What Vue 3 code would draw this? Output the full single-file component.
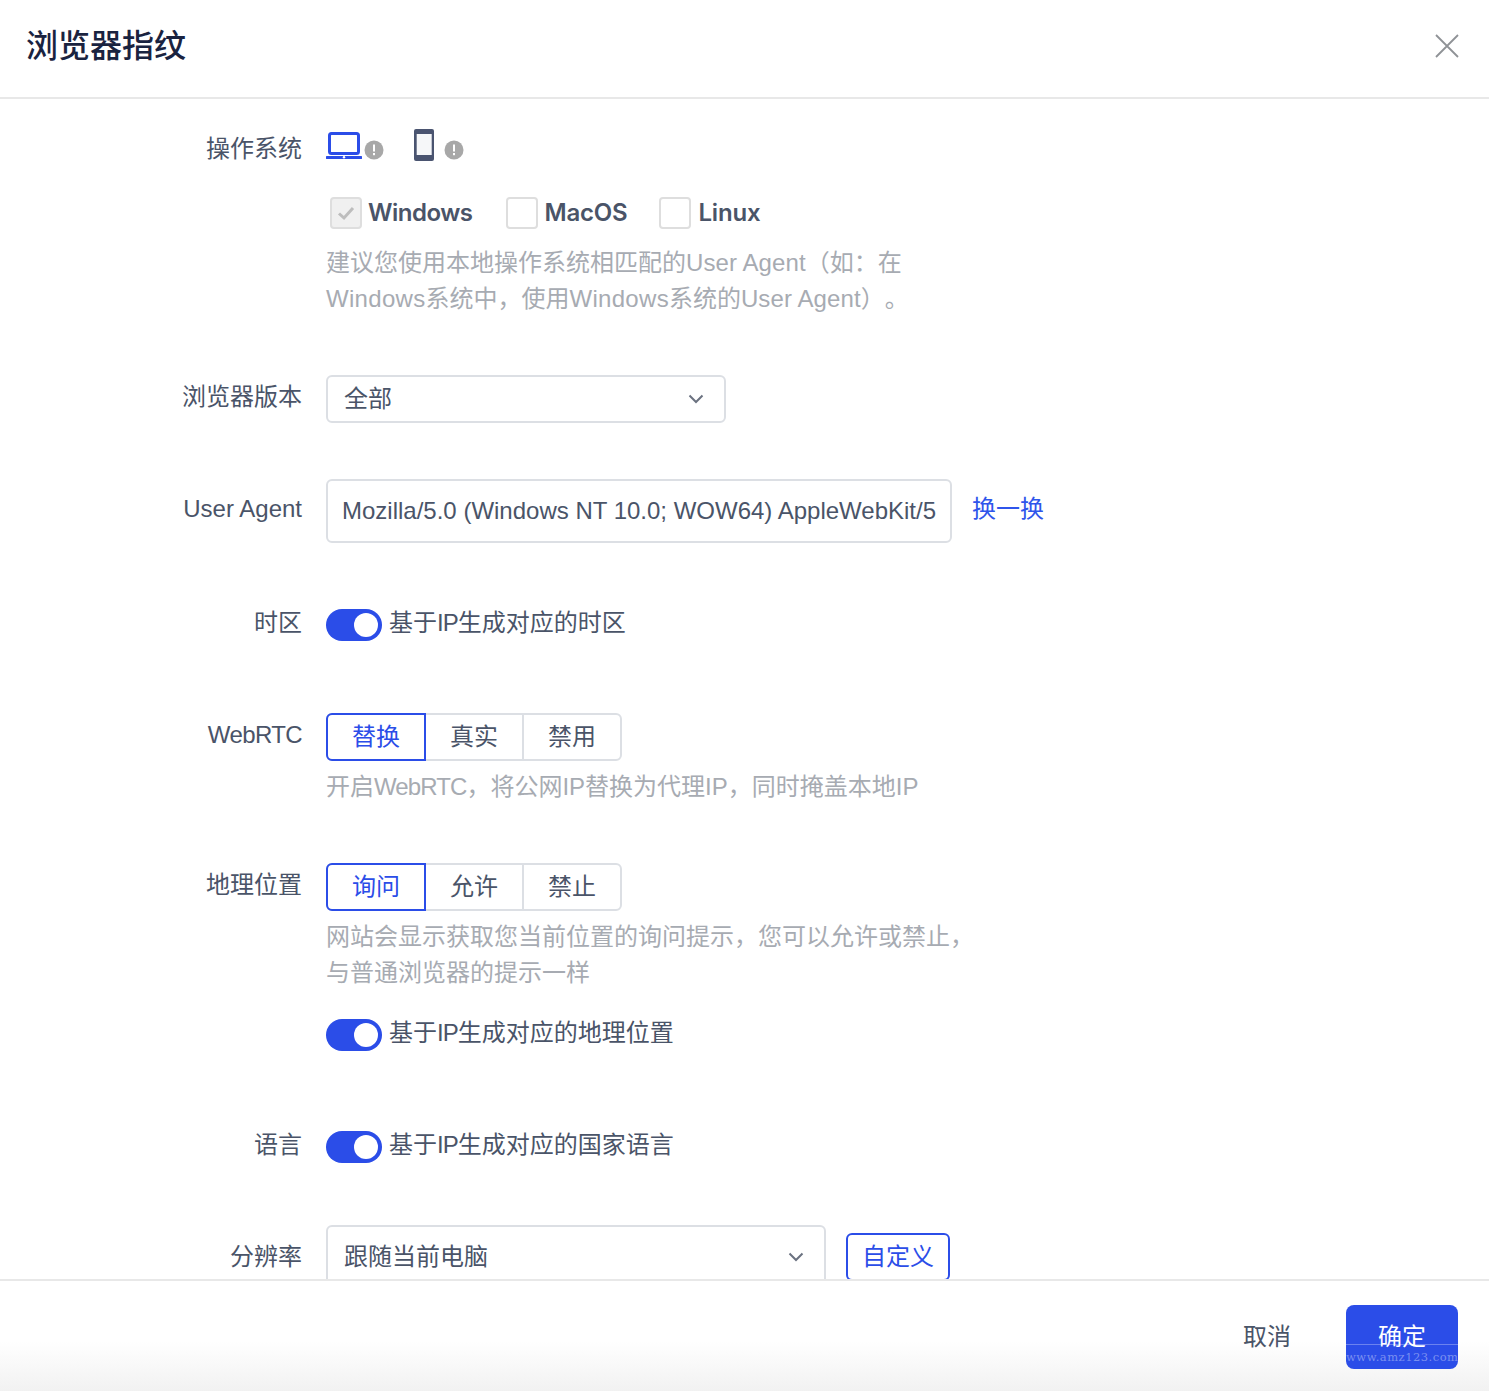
<script setup>
const osOptions = [
  { name: 'Windows', checked: true },
  { name: 'MacOS', checked: false },
  { name: 'Linux', checked: false }
]
const webrtc = ['替换', '真实', '禁用']
const geo = ['询问', '允许', '禁止']
</script>

<template>
  <div class="dialog">
    <header class="head">
      <h1 class="title">浏览器指纹</h1>
      <svg class="close" viewBox="0 0 24 24" width="24" height="24" fill="none" stroke="#8f9296" stroke-width="1.8">
        <path d="M1 1 23 23M23 1 1 23" />
      </svg>
    </header>

    <main class="body">
      <section class="row row-os">
        <div class="label">操作系统</div>
        <div class="field">
          <div class="devices">
            <span class="device">
              <svg width="36" height="30" viewBox="0 0 36 30" fill="none">
                <rect x="3.500" y="2.500" width="29" height="20" rx="2" stroke="#2b4de8" stroke-width="3" />
                <path d="M1 26.500H35" stroke="#2b4de8" stroke-width="3" stroke-linecap="round" />
                <circle cx="18" cy="26.300" r="1.200" fill="#fff" />
              </svg>
              <svg class="warn" width="20" height="20" viewBox="0 0 20 20">
                <circle cx="10" cy="10" r="9.500" fill="#a8a8a8" />
                <rect x="9" y="4.500" width="2" height="7" fill="#fff" />
                <rect x="9" y="13" width="2" height="2.200" fill="#fff" />
              </svg>
            </span>
            <span class="device device-phone">
              <svg width="22" height="32" viewBox="0 0 22 32">
                <rect x="2" y="0" width="20" height="32" rx="2" fill="#4a5470" />
                <rect x="4.700" y="5" width="15" height="21" fill="#f6f7f9" />
              </svg>
              <svg class="warn" width="20" height="20" viewBox="0 0 20 20">
                <circle cx="10" cy="10" r="9.500" fill="#a8a8a8" />
                <rect x="9" y="4.500" width="2" height="7" fill="#fff" />
                <rect x="9" y="13" width="2" height="2.200" fill="#fff" />
              </svg>
            </span>
          </div>
          <div class="checks">
            <label v-for="o in osOptions" :key="o.name" class="check">
              <span class="box" :class="{ 'box-on': o.checked }">
                <svg v-if="o.checked" width="20" height="16" viewBox="0 0 20 16" fill="none">
                  <path d="M3 8.500 8 13 17 3" stroke="#bdbdbd" stroke-width="3" />
                </svg>
              </span>
              <span class="check-text">{{ o.name }}</span>
            </label>
          </div>
          <p class="hint hint-os">建议您使用本地操作系统相匹配的<span class="wide-s">User Agent</span>（如：在<br /><span class="wide">Windows</span>系统中，使用<span class="wide">Windows</span>系统的<span class="wide-s">User Agent</span>）。</p>
        </div>
      </section>

      <section class="row row-version">
        <div class="label">浏览器版本</div>
        <div class="field">
          <div class="select select-400">
            <span>全部</span>
            <svg width="16" height="10" viewBox="0 0 16 10" fill="none"><path d="M1.500 1.500 8 8l6.500-6.500" stroke="#6b7280" stroke-width="2" /></svg>
          </div>
        </div>
      </section>

      <section class="row row-ua">
        <div class="label">User Agent</div>
        <div class="field field-inline">
          <div class="ua-input"><span class="ua-text">Mozilla/5.0 (Windows NT 10.0; WOW64) AppleWebKit/5</span></div>
          <a class="link">换一换</a>
        </div>
      </section>

      <section class="row row-tz">
        <div class="label">时区</div>
        <div class="field">
          <div class="switch-line"><span class="switch"><i></i></span><span class="switch-text">基于<span class="ip">IP</span>生成对应的时区</span></div>
        </div>
      </section>

      <section class="row row-rtc">
        <div class="label label-rtc">WebRTC</div>
        <div class="field">
          <div class="seg">
            <span v-for="(s, i) in webrtc" :key="s" class="seg-item" :class="{ active: i === 0 }">{{ s }}</span>
          </div>
          <p class="hint hint-seg">开启<span class="tight">WebRTC</span>，将公网IP替换为代理IP，同时掩盖本地IP</p>
        </div>
      </section>

      <section class="row row-geo">
        <div class="label">地理位置</div>
        <div class="field">
          <div class="seg">
            <span v-for="(s, i) in geo" :key="s" class="seg-item" :class="{ active: i === 0 }">{{ s }}</span>
          </div>
          <p class="hint hint-seg">网站会显示获取您当前位置的询问提示，您可以允许或禁止，<br />与普通浏览器的提示一样</p>
          <div class="switch-line geo-switch"><span class="switch"><i></i></span><span class="switch-text">基于<span class="ip">IP</span>生成对应的地理位置</span></div>
        </div>
      </section>

      <section class="row row-lang">
        <div class="label">语言</div>
        <div class="field">
          <div class="switch-line"><span class="switch"><i></i></span><span class="switch-text">基于<span class="ip">IP</span>生成对应的国家语言</span></div>
        </div>
      </section>

      <section class="row row-res">
        <div class="label">分辨率</div>
        <div class="field field-res">
          <div class="select select-500">
            <span>跟随当前电脑</span>
            <svg width="16" height="10" viewBox="0 0 16 10" fill="none"><path d="M1.500 1.500 8 8l6.500-6.500" stroke="#6b7280" stroke-width="2" /></svg>
          </div>
          <span class="custom">自定义</span>
        </div>
      </section>
    </main>

    <footer class="foot">
      <span class="cancel">取消</span>
      <span class="ok">
        确定
        <span class="mark">www.amz123.com</span>
      </span>
    </footer>
  </div>
</template>

<style>
html, body { margin: 0; background: #fff; }
</style>

<style scoped>
* { box-sizing: border-box; }
.dialog {
  width: 1489px;
  height: 1391px;
  display: flex;
  flex-direction: column;
  overflow: hidden;
  background: #fff;
  color: #4a5468;
  font-family: "Liberation Sans", "Noto Sans CJK SC", sans-serif;
  font-size: 24px;
  line-height: 36px;
  text-spacing-trim: space-all;
}
.head {
  flex: none;
  height: 99px;
  border-bottom: 2px solid #e8e8e8;
  display: flex;
  align-items: center;
  justify-content: space-between;
  padding: 0 30px 6px 26px;
}
.title { margin: 0; font-size: 32px; font-weight: 500; line-height: 44px; color: #1a2340; }
.body { flex: 1; min-height: 0; overflow: hidden; }
.row { display: grid; grid-template-columns: 302px 1fr; column-gap: 24px; }
.label { text-align: right; white-space: nowrap; }
.label-rtc { letter-spacing: -0.600px; }
.tight { letter-spacing: -0.900px; }
.wide { letter-spacing: 0.300px; }
.wide-s { letter-spacing: 0.100px; }
.ip { letter-spacing: -1px; }
.field { min-width: 0; }
.row-os { margin-top: 30px; }
.row-os .label { padding-top: 2px; }
.devices { display: flex; height: 32px; }
.device { display: flex; align-items: flex-end; width: 86px; }
.warn { margin: 0 0 1px 2px; }
.device-phone .warn { margin-left: 10px; }
.checks { display: flex; margin-top: 34px; padding-left: 4px; }
.check { display: flex; align-items: center; margin-right: 32px; }
.check:first-child { margin-right: 33px; }
.check-text {
  font-family: Inter, "Noto Sans CJK SC", sans-serif;
  font-weight: 600;
  letter-spacing: -0.200px;
}
.check:first-child .check-text { letter-spacing: -0.500px; }
.box {
  width: 32px;
  height: 32px;
  margin-right: 7px;
  border: 2px solid #dedede;
  border-radius: 4px;
  display: flex;
  align-items: center;
  justify-content: center;
}
.check:first-child .box { margin-right: 6px; }
.box-on { background: #f0f0f0; }
.hint { margin: 0; color: #a7abb2; }
.hint-os { margin-top: 14px; }
.hint-seg { margin-top: 8px; }
.row-version { margin-top: 58px; }
.row-version .label { line-height: 44px; }
.select {
  height: 48px;
  padding: 0 20px 0 16px;
  border: 2px solid #dcdfe4;
  border-radius: 6px;
  display: flex;
  align-items: center;
  justify-content: space-between;
}
.select-400 { width: 400px; }
.select-500 { width: 500px; height: 64px; flex: none; }
.row-ua { margin-top: 56px; }
.row-ua .label { line-height: 60px; }
.field-inline { display: flex; align-items: flex-start; }
.ua-input {
  width: 626px;
  height: 64px;
  padding: 0 14px;
  border: 2px solid #dcdfe4;
  border-radius: 6px;
  display: flex;
  align-items: center;
}
.ua-text { white-space: nowrap; }
.link { margin-left: 20px; line-height: 60px; color: #2f55eb; }
.row-tz { margin-top: 66px; }
.row-tz .label, .row-lang .label { line-height: 28px; }
.switch-line { display: flex; align-items: center; height: 32px; line-height: 28px; }
.switch-text { margin-top: -5px; }
.switch {
  flex: none;
  width: 56px;
  height: 32px;
  margin-right: 7px;
  border-radius: 16px;
  background: #2b4de8;
  position: relative;
  display: block;
}
.switch i {
  position: absolute;
  top: 4px;
  right: 4px;
  width: 24px;
  height: 24px;
  border-radius: 50%;
  background: #fff;
}
.row-rtc { margin-top: 72px; }
.row-rtc .label { line-height: 44px; }
.seg {
  width: 296px;
  height: 48px;
  display: flex;
  border: 2px solid #dcdfe4;
  border-radius: 6px;
}
.seg-item {
  width: 96px;
  margin: -2px 0;
  display: flex;
  align-items: center;
  justify-content: center;
}
.seg-item:last-child { flex: 1; border-left: 2px solid #dcdfe4; }
.seg-item.active {
  flex: none;
  width: 100px;
  margin-left: -2px;
  border: 2px solid #2b4de8;
  border-radius: 6px 0 0 6px;
  color: #2b4de8;
}
.row-geo { margin-top: 58px; }
.row-geo .label { line-height: 44px; }
.geo-switch { margin-top: 28px; }
.row-lang { margin-top: 80px; }
.row-res { margin-top: 62px; }
.row-res .label { line-height: 64px; }
.field-res { display: flex; align-items: flex-start; }
.custom {
  flex: none;
  width: 104px;
  height: 48px;
  margin: 8px 0 0 20px;
  border: 2px solid #2b4de8;
  border-radius: 6px;
  color: #2b4de8;
  display: flex;
  align-items: center;
  justify-content: center;
}
.foot {
  flex: none;
  height: 112px;
  border-top: 2px solid #e8e8e8;
  background: linear-gradient(to bottom, #fff 0, #fff 60px, #f1f1f1 112px);
  display: flex;
  align-items: flex-start;
  justify-content: flex-end;
  padding: 24px 31px 0 0;
  position: relative;
  z-index: 1;
}
.cancel { height: 64px; display: flex; align-items: center; margin-right: 55px; }
.ok {
  width: 112px;
  height: 64px;
  border-radius: 8px;
  background: #2b4de8;
  color: #fff;
  display: flex;
  align-items: center;
  justify-content: center;
  position: relative;
  overflow: hidden;
}
.mark {
  position: absolute;
  left: 0;
  right: 0;
  bottom: 0;
  height: 25px;
  padding-top: 4px;
  border-top: 1px solid rgba(255, 255, 255, 0.3);
  text-align: center;
  white-space: nowrap;
  font-family: "DejaVu Serif", serif;
  font-size: 11.500px;
  line-height: 16px;
  letter-spacing: 0.500px;
  color: rgba(255, 255, 255, 0.38);
}
</style>
